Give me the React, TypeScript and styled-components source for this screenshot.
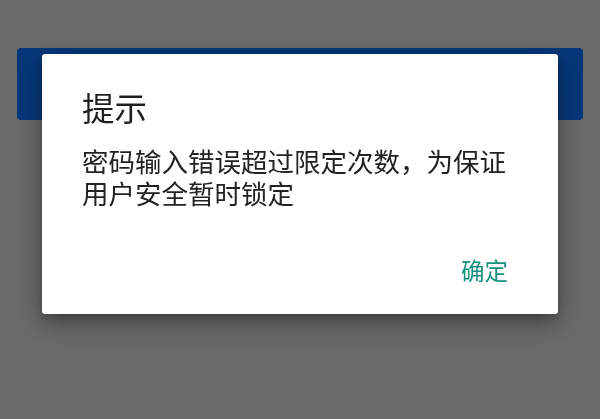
import React from 'react';
import styled, { createGlobalStyle } from 'styled-components';

const GlobalStyle = createGlobalStyle`
  html, body {
    margin: 0;
    padding: 0;
    background: #6b6b6b;
    font-family: "Noto Sans CJK SC", "Noto Sans", sans-serif;
  }
`;

const Page = styled.div`
  width: 600px;
  height: 419px;
  padding: 48px 17px 0;
  box-sizing: border-box;
  overflow: hidden;
`;

const HeaderBar = styled.div`
  height: 72px;
  border-radius: 4px;
  background: #05377a;
`;

const Overlay = styled.div`
  position: fixed;
  inset: 0;
  display: flex;
  justify-content: center;
  align-items: flex-start;
  padding-top: 54px;
`;

const Dialog = styled.div`
  width: 516px;
  height: 260px;
  box-sizing: border-box;
  padding: 33px 40px 22px;
  background: #ffffff;
  border-radius: 3px;
  box-shadow: 0 10px 28px rgba(0, 0, 0, 0.35), 0 4px 10px rgba(0, 0, 0, 0.2);
  display: flex;
  flex-direction: column;
`;

const Title = styled.h2`
  margin: 0;
  font-size: 32.5px;
  line-height: 40px;
  font-weight: 400;
  color: #1f1f1f;
`;

const Message = styled.p`
  margin: 18px 0 0;
  font-size: 26.5px;
  line-height: 32px;
  color: #222222;
`;

const Actions = styled.div`
  margin-top: auto;
  display: flex;
  justify-content: flex-end;
`;

const ActionButton = styled.button`
  border: none;
  background: transparent;
  padding: 6px 10px;
  font-family: inherit;
  font-size: 23.5px;
  line-height: 32px;
  color: #15917f;
  cursor: pointer;
`;

const App: React.FC = () => {
  return (
    <>
      <GlobalStyle />
      <Page>
        <HeaderBar />
      </Page>
      <Overlay>
        <Dialog role="dialog">
          <Title>提示</Title>
          <Message>密码输入错误超过限定次数，为保证用户安全暂时锁定</Message>
          <Actions>
            <ActionButton type="button">确定</ActionButton>
          </Actions>
        </Dialog>
      </Overlay>
    </>
  );
};

export default App;
